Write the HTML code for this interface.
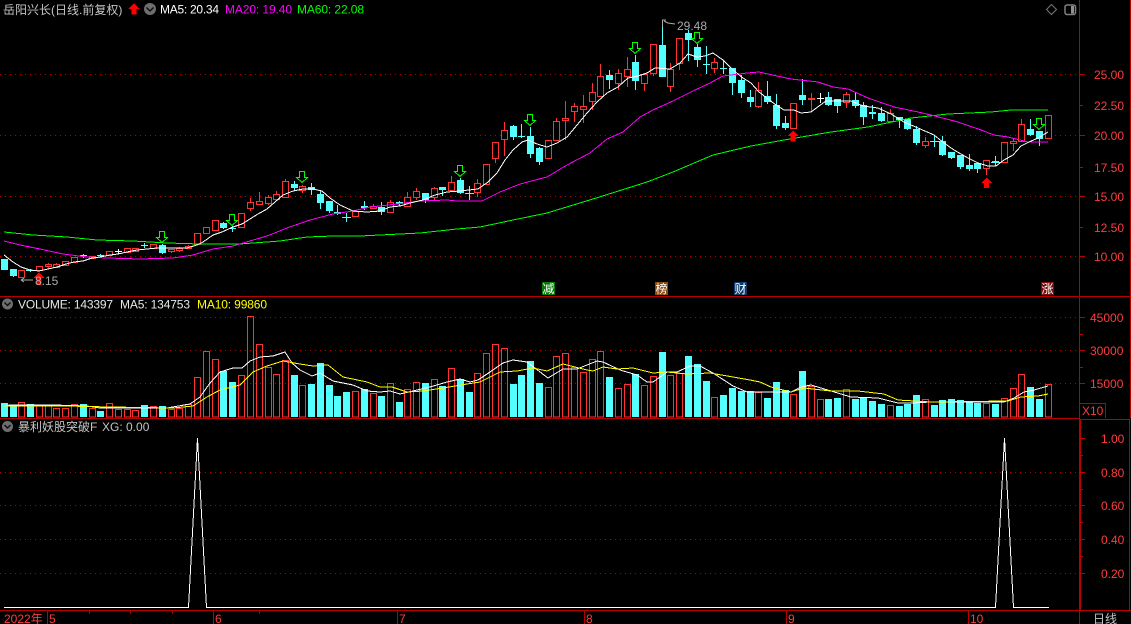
<!DOCTYPE html>
<html><head><meta charset="utf-8"><style>
html,body{margin:0;padding:0;background:#000;width:1131px;height:624px;overflow:hidden}
svg{display:block}
text{font-family:"Liberation Sans","WenQuanYi Zen Hei","Noto Sans CJK SC",sans-serif;font-size:12px}
.a{fill:#ff3c3c;font-size:12px}
.g{fill:#c4c4c4}
</style></head><body>
<svg width="1131" height="624" viewBox="0 0 1131 624" xmlns="http://www.w3.org/2000/svg">
<g shape-rendering="crispEdges" fill="none">
<!-- grid -->
<path stroke="#b00000" stroke-dasharray="1 4" d="M0 74.5H1079M0 135.5H1079M0 196.5H1079M0 256.5H1079M0 317.5H1079M0 350.5H1079M0 383.5H1079M0 472.5H1079M0 505.5H1079M0 539.5H1079M0 573.5H1079"/>
<!-- frame -->
<path stroke="#b80000" d="M0 296.5H1131M0 418.5H1080M0 610.5H1131M1079.5 0V624M1080.5 419V610M1080 419.5H1129.5V610M1129.5 419V610M1130.5 0V418M1080 403.5H1105.5V418M47.5 611V624M213.5 611V624M397.5 611V624M584.5 611V624M786.5 611V624M968.5 611V624"/>
<path stroke="#b80000" d="M89.5 611v3M130.5 611v3M172.5 611v3M259.5 611v3M1080 74.5h5M1080 105.5h3M1080 135.5h5M1080 167.5h3M1080 196.5h5M1080 227.5h3M1080 256.5h5M1080 317.5h5M1080 334.5h3M1080 350.5h5M1080 367.5h3M1080 383.5h5M1080 438.5h5M1080 455.5h3M1080 472.5h5M1080 489.5h3M1080 505.5h5M1080 522.5h3M1080 539.5h5M1080 556.5h3M1080 573.5h5"/>
<!-- candles cyan wicks -->
<path stroke="#54ffff" d="M13.5 269V277M30.5 269V272M26 270.5H35M83.5 254V258M80 255.5H87M100.5 254V258M97 255.5H104M144.5 243V248M141 245.5H148M162.5 244V254M223.5 222V229M232.5 226V232M229 228.5H236M294.5 181V190M311.5 183V195M320.5 191V209M329.5 201V213M337.5 205V215M346.5 213V222M342 217.5H351M364.5 201V210M381.5 202V215M399.5 201V206M425.5 193V203M442.5 187V196M460.5 178V194M469.5 186V200M465 193.5H474M513.5 125V140M521.5 124V138M518 136.5H525M530.5 127V158M539.5 147V165M609.5 70V89M635.5 55V90M662.5 20V77M688.5 30V61M697.5 44V67M706.5 46V74M703 64.5H710M723.5 60V74M720 68.5H727M732.5 68V95M741.5 75V98M750.5 90V107M767.5 81V104M776.5 94V129M785.5 116V130M802.5 79V105M828.5 92V106M837.5 99V113M855.5 93V108M863.5 102V125M872.5 105V119M881.5 107V122M899.5 117V128M907.5 119V130M916.5 126V145M934.5 136V147M930 141.5H939M942.5 136V156M951.5 152V159M960.5 155V169M969.5 154V171M977.5 163V173M995.5 156V166M991 162.5H1000M1030.5 119V136M1039.5 131V146"/>
<!-- cyan bodies -->
<path stroke="#54ffff" stroke-width="7" d="M4.5 259V270M13.5 269V276M30.5 270V271M162.5 245V253M223.5 223V228M294.5 184V188M311.5 187V190M320.5 194V203M329.5 201V211M337.5 212V214M364.5 206V208M381.5 207V212M399.5 202V204M425.5 193V200M442.5 187V190M460.5 180V193M513.5 126V137M530.5 136V154M539.5 148V162M609.5 75V80M635.5 62V81M662.5 45V77M688.5 33V40M697.5 47V60M706.5 64V65M732.5 68V83M741.5 80V93M750.5 97V102M767.5 96V102M776.5 105V126M785.5 123V128M802.5 95V100M828.5 97V105M837.5 99V106M855.5 100V106M863.5 105V117M872.5 112V114M881.5 113V121M899.5 117V120M907.5 119V129M916.5 129V143M942.5 141V155M951.5 152V158M960.5 155V167M969.5 165V169M977.5 163V169M995.5 161V163M1030.5 129V135M1039.5 131V139"/>
<!-- white cross -->
<path stroke="#fff" d="M118.5 249V254M115 251.5H122M820.5 93V103M817 98.5H824"/>
<!-- red wicks -->
<path stroke="#ff3232" d="M48.5 263V269M56.5 263V268M171.5 249V253M179.5 247V252M188.5 245V249M250.5 198V211M259.5 192V205M268.5 195V205M276.5 191V200M285.5 179V198M302.5 185V193M355.5 210V217M373.5 204V209M390.5 200V213M407.5 192V207M416.5 188V200M434.5 187V201M451.5 176V191M477.5 179V197M495.5 158V163M504.5 122V156M556.5 118V141M565.5 101V140M574.5 103V122M583.5 95V123M592.5 83V110M600.5 64V97M618.5 69V90M627.5 57V87M644.5 74V91M653.5 44V76M670.5 63V92M679.5 38V70M714.5 58V73M758.5 82V108M811.5 93V111M846.5 92V108M890.5 109V122M925.5 137V148M986.5 168V175M1013.5 139V151M1021.5 119V142"/>
<!-- red bodies -->
<path stroke="#ff3232" fill="#000" d="M18.5 270.5h6v7h-6zM36.5 266.5h6v4h-6zM45.5 264.5h6v2h-6zM53.5 264.5h6v3h-6zM62.5 261.5h6v4h-6zM71.5 257.5h6v5h-6zM89.5 256.5h6v2h-6zM106.5 251.5h6v4h-6zM124.5 248.5h6v4h-6zM132.5 248.5h6v3h-6zM150.5 244.5h6v4h-6zM168.5 249.5h6v2h-6zM176.5 248.5h6v2h-6zM185.5 246.5h6v2h-6zM194.5 233.5h6v11h-6zM203.5 227.5h6v6h-6zM212.5 220.5h6v10h-6zM238.5 213.5h6v14h-6zM247.5 202.5h6v6h-6zM256.5 201.5h6v3h-6zM265.5 197.5h6v6h-6zM273.5 194.5h6v5h-6zM282.5 181.5h6v16h-6zM299.5 186.5h6v4h-6zM352.5 211.5h6v5h-6zM370.5 206.5h6v2h-6zM387.5 202.5h6v10h-6zM404.5 197.5h6v9h-6zM413.5 191.5h6v6h-6zM431.5 188.5h6v9h-6zM448.5 182.5h6v8h-6zM474.5 183.5h6v9h-6zM483.5 164.5h6v20h-6zM492.5 142.5h6v16h-6zM501.5 130.5h6v9h-6zM545.5 140.5h6v18h-6zM553.5 121.5h6v19h-6zM562.5 118.5h6v2h-6zM571.5 106.5h6v5h-6zM580.5 106.5h6v3h-6zM589.5 92.5h6v9h-6zM597.5 76.5h6v20h-6zM615.5 73.5h6v10h-6zM624.5 69.5h6v7h-6zM641.5 74.5h6v9h-6zM650.5 44.5h6v29h-6zM667.5 69.5h6v17h-6zM676.5 38.5h6v25h-6zM711.5 62.5h6v6h-6zM755.5 90.5h6v16h-6zM790.5 103.5h6v25h-6zM808.5 98.5h6v1h-6zM843.5 94.5h6v8h-6zM887.5 113.5h6v8h-6zM922.5 141.5h6v4h-6zM983.5 160.5h6v8h-6zM1001.5 142.5h6v20h-6zM1010.5 141.5h6v2h-6zM1018.5 124.5h6v17h-6zM1045.5 115.5h6v23h-6z"/>
<!-- volume cyan -->
<path stroke="#54ffff" stroke-width="7" d="M4.5 403V417M13.5 406V417M30.5 404V417M83.5 404V417M100.5 411V417M144.5 405V417M162.5 406V417M223.5 371V417M232.5 382V417M294.5 375V417M311.5 384V417M320.5 363V417M329.5 385V417M337.5 396V417M346.5 392V417M364.5 389V417M381.5 396V417M399.5 402V417M425.5 383V417M442.5 386V417M460.5 379V417M469.5 392V417M513.5 384V417M521.5 375V417M530.5 361V417M539.5 383V417M609.5 377V417M635.5 374V417M662.5 352V417M688.5 356V417M697.5 364V417M706.5 381V417M723.5 395V417M732.5 388V417M741.5 391V417M750.5 391V417M767.5 398V417M776.5 382V417M785.5 390V417M802.5 371V417M828.5 399V417M837.5 398V417M855.5 399V417M863.5 398V417M872.5 401V417M881.5 404V417M899.5 406V417M907.5 404V417M916.5 395V417M934.5 405V417M942.5 400V417M951.5 399V417M960.5 400V417M969.5 402V417M977.5 403V417M995.5 404V417M1030.5 387V417M1039.5 399V417"/>
<!-- volume red -->
<path stroke="#ff3232" d="M18.5 402.5h6V417h-6zM36.5 405.5h6V417h-6zM45.5 405.5h6V417h-6zM53.5 408.5h6V417h-6zM62.5 408.5h6V417h-6zM71.5 404.5h6V417h-6zM89.5 408.5h6V417h-6zM106.5 403.5h6V417h-6zM115.5 409.5h6V417h-6zM124.5 409.5h6V417h-6zM132.5 410.5h6V417h-6zM150.5 406.5h6V417h-6zM168.5 409.5h6V417h-6zM176.5 408.5h6V417h-6zM185.5 404.5h6V417h-6zM194.5 377.5h6V417h-6zM203.5 351.5h6V417h-6zM212.5 359.5h6V417h-6zM238.5 375.5h6V417h-6zM247.5 316.5h6V417h-6zM256.5 344.5h6V417h-6zM265.5 367.5h6V417h-6zM273.5 374.5h6V417h-6zM282.5 360.5h6V417h-6zM299.5 385.5h6V417h-6zM352.5 391.5h6V417h-6zM370.5 393.5h6V417h-6zM387.5 383.5h6V417h-6zM404.5 389.5h6V417h-6zM413.5 382.5h6V417h-6zM431.5 379.5h6V417h-6zM448.5 368.5h6V417h-6zM474.5 373.5h6V417h-6zM483.5 353.5h6V417h-6zM492.5 344.5h6V417h-6zM501.5 348.5h6V417h-6zM545.5 387.5h6V417h-6zM553.5 356.5h6V417h-6zM562.5 353.5h6V417h-6zM571.5 367.5h6V417h-6zM580.5 372.5h6V417h-6zM589.5 359.5h6V417h-6zM597.5 351.5h6V417h-6zM615.5 388.5h6V417h-6zM624.5 384.5h6V417h-6zM641.5 385.5h6V417h-6zM650.5 376.5h6V417h-6zM667.5 375.5h6V417h-6zM676.5 373.5h6V417h-6zM711.5 397.5h6V417h-6zM755.5 392.5h6V417h-6zM790.5 394.5h6V417h-6zM808.5 386.5h6V417h-6zM817.5 399.5h6V417h-6zM843.5 389.5h6V417h-6zM887.5 405.5h6V417h-6zM922.5 399.5h6V417h-6zM983.5 403.5h6V417h-6zM1001.5 398.5h6V417h-6zM1010.5 388.5h6V417h-6zM1018.5 374.5h6V417h-6zM1045.5 384.5h6V417h-6z"/>
<!-- MA lines -->
<polyline stroke="#00ff00" points="4,232 33,235 67,237 97,240 133,241 167,243 200,244 240,244 253,243 280,241 307,237 333,236 360,236 380,235 420,233 457,229 480,227 513,220 547,213 593,199 647,182 673,172 713,155 751,146 784,140 831,132 868,127 911,118 948,114 991,112 1011,110 1048,110"/>
<polyline stroke="#ff00ff" points="4,241 20,245 40,249 63,254 87,257 107,258 140,259 173,258 193,255 213,249 233,246 243,243 267,236 287,228 310,220 333,214 353,211 370,207 380,206 397,204 420,201 447,200 457,201 482,201 490,197 500,192 520,184 547,177 567,165 590,153 607,139 623,132 640,117 653,110 673,101 693,91 710,83 723,76 747,73 759,72 768,74 791,79 818,82 833,87 848,89 868,98 894,107 918,112 931,115 958,122 981,130 994,135 1008,137 1028,142 1048,142"/>
<polyline stroke="#fff" points="4,255 13,262 21,267 30,270 39,271 48,269 57,267 66,264 74,262 83,261 92,258 100,257 110,255 118,254 127,252 137,250 147,249 157,248 167,248 187,248 197,245 203,242 213,235 222,232 233,227 242,224 250,219 258,214 267,209 275,202 283,195 293,191 303,189 313,189 322,191 330,198 340,205 353,211 367,212 380,211 390,207 400,206 410,203 423,200 435,195 447,192 460,191 478,189 488,182 497,173 505,160 513,150 522,142 528,140 537,144 547,147 557,143 567,137 577,125 587,113 597,102 607,93 618,87 628,78 638,76 647,73 655,68 670,69 680,63 688,54 697,57 705,56 713,53 723,60 733,70 743,78 751,83 759,92 776,105 784,110 794,110 801,113 811,112 819,106 826,101 838,101 851,101 863,106 878,108 891,114 904,122 918,128 934,135 944,143 954,150 968,158 978,163 988,166 996,166 1004,160 1013,155 1021,146 1029,142 1038,138 1048,132"/>
<!-- volume MA -->
<polyline stroke="#fff" points="4,406 10,405 53,405 87,406 100,408 140,408 167,408 190,404 200,397 210,383 220,372 233,368 242,368 250,361 260,357 273,356 285,352 292,363 300,370 312,376 320,373 333,381 353,385 367,391 380,392 390,391 400,394 413,391 430,387 447,382 460,379 470,382 478,380 490,372 503,363 513,360 527,362 548,378 563,369 577,369 597,361 603,362 620,370 637,375 647,382 653,382 667,372 677,372 690,366 700,366 713,373 733,386 747,392 771,392 791,392 801,387 811,385 831,391 851,397 878,398 898,403 911,403 931,402 1004,402 1014,398 1024,392 1034,390 1048,386"/>
<polyline stroke="#ffff00" points="4,406 67,406 110,407 173,408 193,406 207,397 220,390 240,385 253,372 267,366 283,361 300,364 313,366 328,365 343,377 367,382 380,387 392,387 407,392 423,391 443,388 467,384 480,382 500,372 517,371 533,368 547,371 563,364 587,370 593,371 603,367 617,369 633,368 653,373 667,372 687,374 710,373 733,377 750,380 760,382 771,387 791,392 804,388 831,391 858,391 884,394 898,400 931,402 1008,401 1021,397 1038,396 1048,394"/>
<!-- indicator -->
<path stroke="#fff" d="M4 607.5H188.5L197.5 438L206.5 607.5H995.5L1004.5 438L1013.5 607.5H1049"/>
<!-- green arrows -->
<g stroke="#00ff00" fill="#000">
<path d="M159.5 231.5h5v6h3l-5.500 5-5.500-5h3z"/>
<path d="M229.5 214.5h5v6h3l-5.500 5-5.500-5h3z"/>
<path d="M299.5 171.5h5v6h3l-5.500 5-5.500-5h3z"/>
<path d="M457.5 165.5h5v6h3l-5.500 5-5.500-5h3z"/>
<path d="M527.5 114.5h5v6h3l-5.500 5-5.500-5h3z"/>
<path d="M632.5 42.5h5v6h3l-5.500 5-5.500-5h3z"/>
<path d="M694.5 32.500h5v6h3l-5.500 5-5.500-5h3z"/>
<path d="M1036.500 118.500h5v6h3l-5.500 5-5.500-5h3z"/>
</g>
</g>
<!-- red up arrows -->
<g fill="#ff0000" shape-rendering="crispEdges">
<path d="M134 3l5.500 6h-3v5.500h-5V9h-3z"/>
<path d="M39 272l5.500 6h-3v7h-5v-7h-3z"/>
<path d="M793 130.500l5.500 5.500h-3v5.500h-5V136h-3z"/>
<path d="M986.500 177.500l5.500 5.500h-3v5h-5v-5h-3z"/>
</g>
<!-- labels on chart -->
<path d="M21 280l3-2M21 280l3 2M21 280H33M662.500 27V20H666M664 21L668 23L675 24" stroke="#aaa" fill="none"/>
<text x="35" y="285" fill="#aaa">8.15</text>
<text x="677" y="30" fill="#aaa">29.48</text>
<!-- badges -->
<rect x="542" y="282" width="13" height="13" fill="#067a06"/><text x="542.500" y="293" fill="#fff">减</text>
<rect x="655" y="282" width="13" height="13" fill="#8a4a12"/><text x="655.500" y="293" fill="#fff">榜</text>
<rect x="734" y="282" width="13" height="13" fill="#0c3a6a"/><text x="734.500" y="293" fill="#fff">财</text>
<rect x="1041" y="282" width="13" height="13" fill="#7a0c0c"/><text x="1041.500" y="293" fill="#fff">涨</text>
<!-- headers -->
<text x="3" y="14" class="g">岳阳兴长(日线.前复权)</text>
<circle cx="150" cy="9" r="6" fill="#6e6e6e"/><path d="M146.500 7.500L150 11L153.500 7.500" stroke="#111" stroke-width="1.500" fill="none"/>
<text x="160" y="13.500" fill="#fff" textLength="59">MA5: 20.34</text>
<text x="225" y="13.500" fill="#ff00ff" textLength="67">MA20: 19.40</text>
<text x="297" y="13.500" fill="#00ff00" textLength="67">MA60: 22.08</text>
<path d="M1051.500 4.500L1056.500 9.500L1051.500 14.500L1046.500 9.500Z" stroke="#777" fill="none"/>
<rect x="1065" y="5" width="10.500" height="9.500" rx="2" fill="#000" stroke="#808080" stroke-width="1.500"/><rect x="1071" y="6" width="3" height="7.500" fill="#909090"/>
<circle cx="7.500" cy="304" r="5.500" fill="#6e6e6e"/><path d="M4.500 302.500L7.500 305.500L10.500 302.500" stroke="#111" stroke-width="1.500" fill="none"/>
<text x="18" y="308.500" fill="#e8e8e8" textLength="95">VOLUME: 143397</text>
<text x="120" y="308.500" fill="#e8e8e8" textLength="70">MA5: 134753</text>
<text x="197" y="308.500" fill="#ffff00" textLength="70">MA10: 99860</text>
<circle cx="7.500" cy="426.500" r="5.500" fill="#6e6e6e"/><path d="M4.500 425L7.500 428L10.500 425" stroke="#111" stroke-width="1.500" fill="none"/>
<text x="18" y="431" class="g">暴利妖股突破F</text>
<text x="102" y="431" class="g">XG: 0.00</text>
<!-- axis labels -->
<text x="1094" y="79" class="a">25.00</text>
<text x="1094" y="110" class="a">22.50</text>
<text x="1094" y="140" class="a">20.00</text>
<text x="1094" y="172" class="a">17.50</text>
<text x="1094" y="201" class="a">15.00</text>
<text x="1094" y="232" class="a">12.50</text>
<text x="1094" y="261" class="a">10.00</text>
<text x="1090" y="322" class="a">45000</text>
<text x="1090" y="355" class="a">30000</text>
<text x="1090" y="388" class="a">15000</text>
<text x="1082" y="415" class="a">X10</text>
<text x="1101" y="443" class="a">1.00</text>
<text x="1101" y="477" class="a">0.80</text>
<text x="1101" y="510" class="a">0.60</text>
<text x="1101" y="544" class="a">0.40</text>
<text x="1101" y="578" class="a">0.20</text>
<text x="4" y="623" class="a">2022年</text>
<text x="49" y="623" class="a">5</text>
<text x="215" y="623" class="a">6</text>
<text x="399" y="623" class="a">7</text>
<text x="586" y="623" class="a">8</text>
<text x="788" y="623" class="a">9</text>
<text x="970" y="623" class="a">10</text>
<text x="1093" y="623" class="g">日线</text>
</svg>
</body></html>
